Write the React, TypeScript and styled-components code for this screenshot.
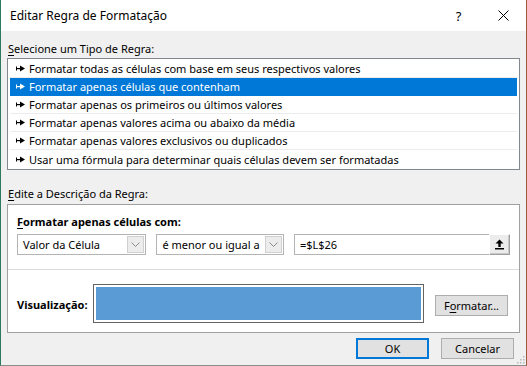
import styled, {createGlobalStyle} from "styled-components";

const GlobalStyle = createGlobalStyle`
  html, body {
    margin: 0;
    padding: 0;
    background: #ffffff;
  }
  * {
    box-sizing: border-box;
  }
`;

const FONT = `"Noto Sans", "Open Sans", sans-serif`;

const Window = styled.div`
  width: 527px;
  height: 366px;
  display: flex;
  flex-direction: column;
  background: #f0f0f0;
  border: 1px solid #8c8c8c;
  border-top: none;
  border-left-color: #2e7a5e;
  border-right-color: #9a5a3a;
  font-family: ${FONT};
  font-size: 11px;
  color: #000;
  position: relative;
`;

const TitleBar = styled.div`
  height: 31px;
  background: #ffffff;
  display: flex;
  align-items: center;
  padding-left: 9px;
  flex-shrink: 0;
`;

const Title = styled.div`
  flex: 1;
  font-size: 12px;
`;

const TitleButton = styled.div`
  width: 45px;
  height: 31px;
  display: flex;
  align-items: center;
  justify-content: center;
  font-size: 13px;
`;

const Body = styled.div`
  flex: 1;
  padding: 0 6px 0 6px;
  display: flex;
  flex-direction: column;
`;

const SectionLabel = styled.div<{ $top: number }>`
  margin-top: ${p => p.$top}px;
  height: 15px;
  line-height: 15px;
  padding-left: 1px;
`;

const Key = styled.span`
  text-decoration: underline;
  text-underline-offset: 2px;
`;

const ListBox = styled.div`
  margin-top: 2px;
  background: #ffffff;
  border: 1px solid #828790;
  padding: 1px 2px;
`;

const ListItem = styled.div<{ $selected?: boolean }>`
  height: 18px;
  display: flex;
  align-items: center;
  gap: 4px;
  padding-left: 6px;
  background: ${p => (p.$selected ? "#0078d7" : "transparent")};
  color: ${p => (p.$selected ? "#ffffff" : "#000000")};
  border-bottom: 1px solid ${p => (p.$selected ? "#0078d7" : "#ececec")};
  &:last-child {
    border-bottom: none;
  }
`;

const Panel = styled.div`
  margin-top: 3px;
  height: 129px;
  background: #ffffff;
  border: 1px solid #a0a0a0;
  display: flex;
  flex-direction: column;
`;

const CriteriaSection = styled.div`
  height: 65px;
  border-bottom: 1px solid #dcdcdc;
  padding: 9px 9px 0 9px;
`;

const BoldLabel = styled.div`
  font-weight: 700;
  height: 16px;
  line-height: 16px;
`;

const ControlRow = styled.div`
  display: flex;
  gap: 10px;
  margin-top: 4px;
`;

const Combo = styled.div<{ $width: number }>`
  width: ${p => p.$width}px;
  height: 21px;
  border: 1px solid #b4b4b4;
  background: #ffffff;
  display: flex;
  align-items: center;
  padding: 1px;
`;

const ComboText = styled.div`
  flex: 1;
  padding-left: 4px;
`;

const ComboArrow = styled.div`
  width: 17px;
  height: 17px;
  background: #ececec;
  border: 1px solid #d0d0d0;
  display: flex;
  align-items: center;
  justify-content: center;
`;

const RefInput = styled.div`
  width: 217px;
  height: 21px;
  border: 1px solid #b4b4b4;
  background: #ffffff;
  display: flex;
  align-items: center;
  padding-left: 5px;
`;

const RefText = styled.div`
  flex: 1;
`;

const RefButton = styled.div`
  width: 21px;
  height: 21px;
  margin-right: -1px;
  background: #ececec;
  border: 1px solid;
  border-color: #ffffff #a0a0a0 #a0a0a0 #ffffff;
  box-shadow: inset -1px -1px 0 #c8c8c8;
  display: flex;
  align-items: center;
  justify-content: center;
`;

const PreviewSection = styled.div`
  flex: 1;
  display: flex;
  align-items: center;
  padding: 0 11px 0 9px;
`;

const PreviewLabel = styled.div`
  font-weight: 700;
  width: 76px;
  margin-top: 6px;
`;

const PreviewBox = styled.div`
  width: 331px;
  height: 39px;
  margin-top: 5px;
  border: 1px solid #646464;
  padding: 2px;
  background: #ffffff;
`;

const PreviewFill = styled.div`
  width: 100%;
  height: 100%;
  background: #5b9bd5;
`;

const Button = styled.div<{ $default?: boolean; $width?: number }>`
  width: ${p => p.$width ?? 73}px;
  height: 21px;
  background: #e1e1e1;
  border: ${p => (p.$default ? "2px solid #0078d7" : "1px solid #adadad")};
  display: flex;
  align-items: center;
  justify-content: center;
`;

const FormatButton = styled(Button)`
  margin-left: 11px;
  margin-top: 8px;
`;

const Footer = styled.div`
  display: flex;
  justify-content: flex-end;
  gap: 12px;
  padding-right: 6px;
  margin-top: 5px;
`;

const Grip = styled.svg`
  position: absolute;
  right: 1px;
  bottom: 1px;
`;

const rules = [
  "Formatar todas as células com base em seus respectivos valores",
  "Formatar apenas células que contenham",
  "Formatar apenas os primeiros ou últimos valores",
  "Formatar apenas valores acima ou abaixo da média",
  "Formatar apenas valores exclusivos ou duplicados",
  "Usar uma fórmula para determinar quais células devem ser formatadas",
];

function Bullet({color}: { color: string }) {
  return (
    <svg width="9" height="7" viewBox="0 0 9 7">
      <rect x="0" y="1.5" width="1" height="4" fill={color}/>
      <rect x="0" y="3" width="5" height="1.2" fill={color}/>
      <path d="M4 0.5 L9 3.5 L4 6.5 Z" fill={color}/>
    </svg>
  );
}

function Chevron() {
  return (
    <svg width="9" height="5" viewBox="0 0 9 5">
      <path d="M0.5 0.5 L4.5 4.5 L8.5 0.5" stroke="#8a8a8a" strokeWidth="1" fill="none"/>
    </svg>
  );
}

export default function App() {
  return (
    <>
      <GlobalStyle/>
      <Window>
        <TitleBar>
          <Title>Editar Regra de Formatação</Title>
          <TitleButton>?</TitleButton>
          <TitleButton>
            <svg width="11" height="11" viewBox="0 0 11 11">
              <path d="M0.5 0.5 L10.5 10.5 M10.5 0.5 L0.5 10.5" stroke="#000" strokeWidth="1"/>
            </svg>
          </TitleButton>
        </TitleBar>
        <Body>
          <SectionLabel $top={10}><Key>S</Key>elecione um Tipo de Regra:</SectionLabel>
          <ListBox>
            {rules.map((rule, i) => (
              <ListItem key={rule} $selected={i === 1}>
                <Bullet color={i === 1 ? "#ffffff" : "#000000"}/>
                {rule}
              </ListItem>
            ))}
          </ListBox>
          <SectionLabel $top={16}><Key>E</Key>dite a Descrição da Regra:</SectionLabel>
          <Panel>
            <CriteriaSection>
              <BoldLabel><Key>F</Key>ormatar apenas células com:</BoldLabel>
              <ControlRow>
                <Combo $width={130}>
                  <ComboText>Valor da Célula</ComboText>
                  <ComboArrow><Chevron/></ComboArrow>
                </Combo>
                <Combo $width={128}>
                  <ComboText>é menor ou igual a</ComboText>
                  <ComboArrow><Chevron/></ComboArrow>
                </Combo>
                <RefInput>
                  <RefText>=$L$26</RefText>
                  <RefButton>
                    <svg width="11" height="11" viewBox="0 0 11 11">
                      <path d="M5.5 0.5 L9.5 4.5 H6.7 V8 H4.3 V4.5 H1.5 Z" fill="#000"/>
                      <rect x="1" y="9" width="9" height="1.5" fill="#000"/>
                    </svg>
                  </RefButton>
                </RefInput>
              </ControlRow>
            </CriteriaSection>
            <PreviewSection>
              <PreviewLabel>Visualização:</PreviewLabel>
              <PreviewBox><PreviewFill/></PreviewBox>
              <FormatButton $width={73}>F<Key>o</Key>rmatar...</FormatButton>
            </PreviewSection>
          </Panel>
          <Footer>
            <Button $default>OK</Button>
            <Button>Cancelar</Button>
          </Footer>
        </Body>
        <Grip width="10" height="10" viewBox="0 0 10 10">
          {[[8, 2], [8, 5], [5, 5], [8, 8], [5, 8], [2, 8]].map(([x, y]) => (
            <rect key={`${x}-${y}`} x={x} y={y} width="1.5" height="1.5" fill="#b8b8b8"/>
          ))}
        </Grip>
      </Window>
    </>
  );
}
